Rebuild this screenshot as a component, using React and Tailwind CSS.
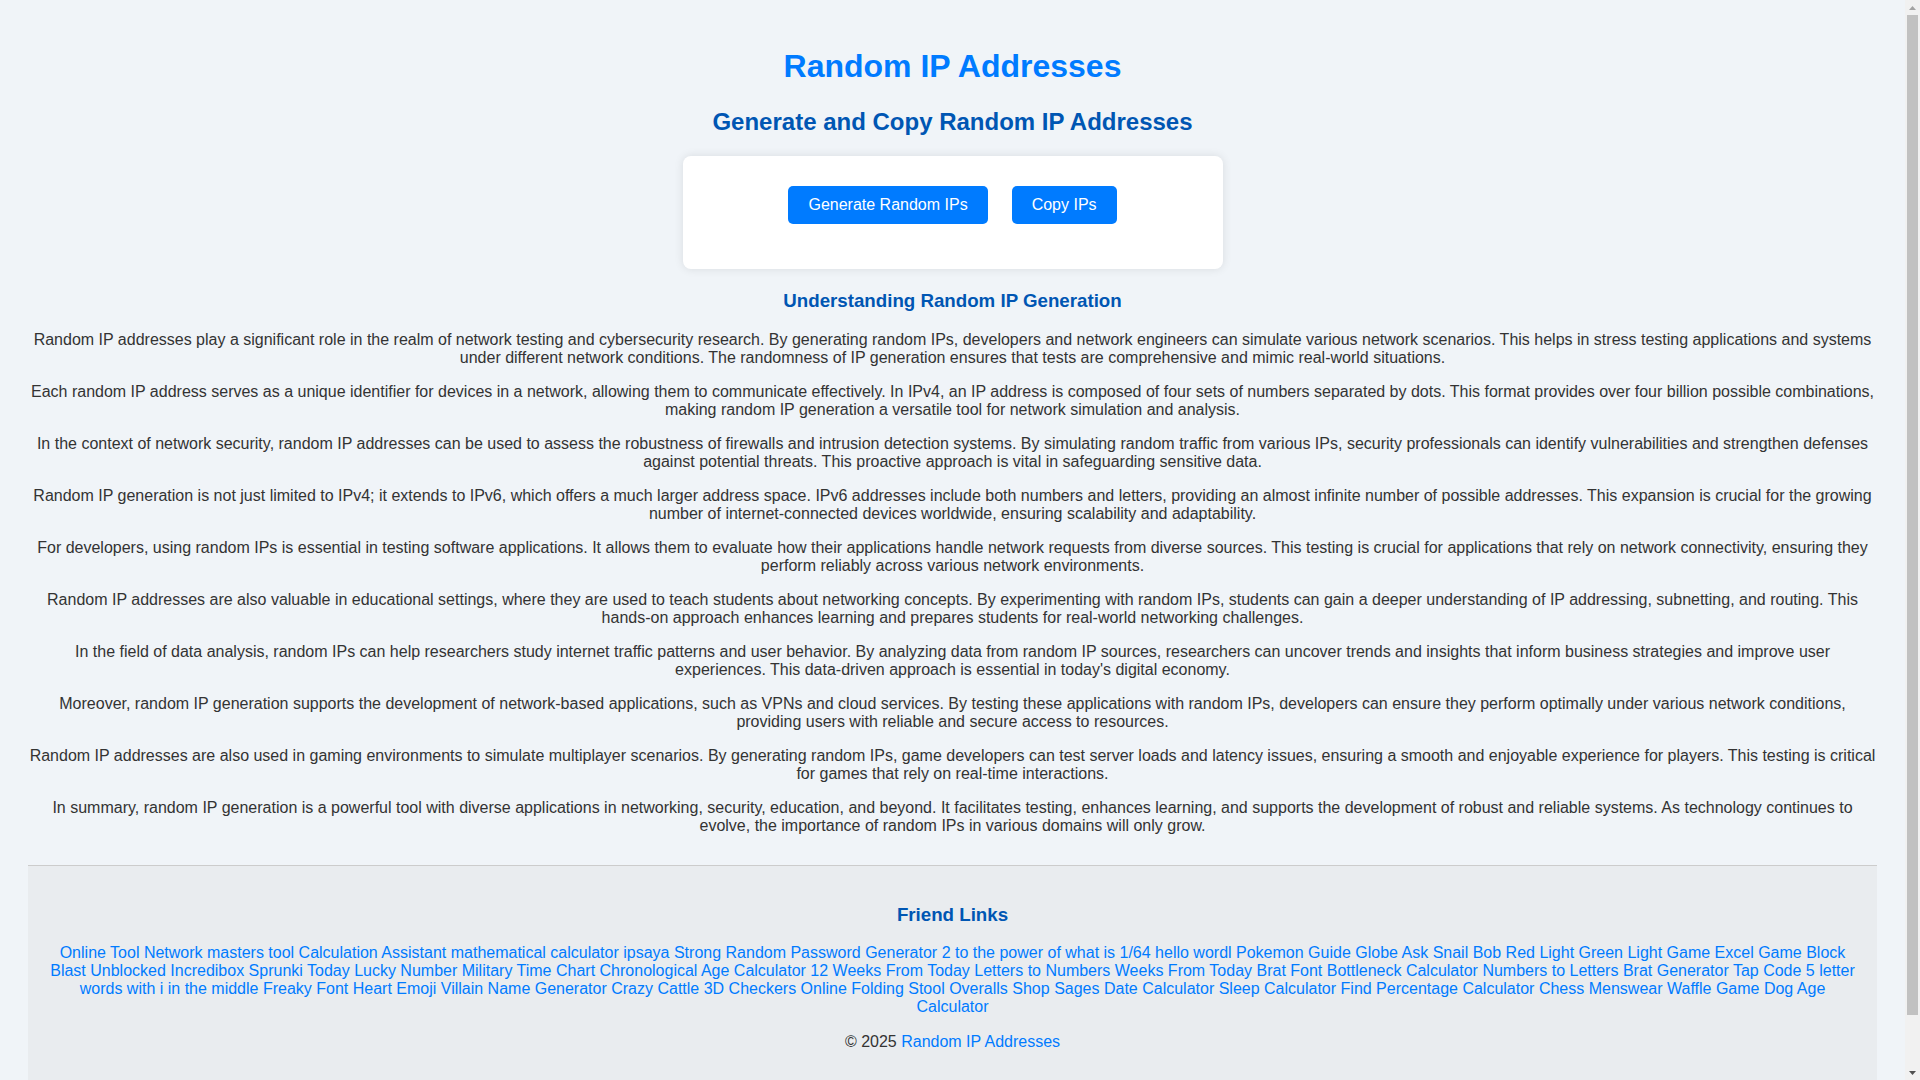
import React from "react";

const paragraphs = [
  "Random IP addresses play a significant role in the realm of network testing and cybersecurity research. By generating random IPs, developers and network engineers can simulate various network scenarios. This helps in stress testing applications and systems under different network conditions. The randomness of IP generation ensures that tests are comprehensive and mimic real-world situations.",
  "Each random IP address serves as a unique identifier for devices in a network, allowing them to communicate effectively. In IPv4, an IP address is composed of four sets of numbers separated by dots. This format provides over four billion possible combinations, making random IP generation a versatile tool for network simulation and analysis.",
  "In the context of network security, random IP addresses can be used to assess the robustness of firewalls and intrusion detection systems. By simulating random traffic from various IPs, security professionals can identify vulnerabilities and strengthen defenses against potential threats. This proactive approach is vital in safeguarding sensitive data.",
  "Random IP generation is not just limited to IPv4; it extends to IPv6, which offers a much larger address space. IPv6 addresses include both numbers and letters, providing an almost infinite number of possible addresses. This expansion is crucial for the growing number of internet-connected devices worldwide, ensuring scalability and adaptability.",
  "For developers, using random IPs is essential in testing software applications. It allows them to evaluate how their applications handle network requests from diverse sources. This testing is crucial for applications that rely on network connectivity, ensuring they perform reliably across various network environments.",
  "Random IP addresses are also valuable in educational settings, where they are used to teach students about networking concepts. By experimenting with random IPs, students can gain a deeper understanding of IP addressing, subnetting, and routing. This hands-on approach enhances learning and prepares students for real-world networking challenges.",
  "In the field of data analysis, random IPs can help researchers study internet traffic patterns and user behavior. By analyzing data from random IP sources, researchers can uncover trends and insights that inform business strategies and improve user experiences. This data-driven approach is essential in today's digital economy.",
  "Moreover, random IP generation supports the development of network-based applications, such as VPNs and cloud services. By testing these applications with random IPs, developers can ensure they perform optimally under various network conditions, providing users with reliable and secure access to resources.",
  "Random IP addresses are also used in gaming environments to simulate multiplayer scenarios. By generating random IPs, game developers can test server loads and latency issues, ensuring a smooth and enjoyable experience for players. This testing is critical for games that rely on real-time interactions.",
  "In summary, random IP generation is a powerful tool with diverse applications in networking, security, education, and beyond. It facilitates testing, enhances learning, and supports the development of robust and reliable systems. As technology continues to evolve, the importance of random IPs in various domains will only grow.",
];

const links = [
  "Online Tool",
  "Network masters tool",
  "Calculation Assistant",
  "mathematical calculator",
  "ipsaya",
  "Strong Random Password Generator",
  "2 to the power of what is 1/64",
  "hello wordl",
  "Pokemon Guide",
  "Globe Ask",
  "Snail Bob",
  "Red Light Green Light Game",
  "Excel Game",
  "Block Blast Unblocked",
  "Incredibox Sprunki",
  "Today Lucky Number",
  "Military Time Chart",
  "Chronological Age Calculator",
  "12 Weeks From Today",
  "Letters to Numbers",
  "Weeks From Today",
  "Brat Font",
  "Bottleneck Calculator",
  "Numbers to Letters",
  "Brat Generator",
  "Tap Code",
  "5 letter words with i in the middle",
  "Freaky Font",
  "Heart Emoji",
  "Villain Name Generator",
  "Crazy Cattle 3D",
  "Checkers Online",
  "Folding Stool",
  "Overalls Shop",
  "Sages",
  "Date Calculator",
  "Sleep Calculator",
  "Find Percentage Calculator",
  "Chess",
  "Menswear",
  "Waffle Game",
  "Dog Age Calculator",
];

function Scrollbar() {
  return (
    <div className="flex h-screen w-[15px] shrink-0 flex-col bg-[#f1f1f1]">
      <div className="flex h-[15px] items-center justify-center">
        <svg width="7" height="4" viewBox="0 0 7 4">
          <polygon points="3.5,0 7,4 0,4" fill="#a3a3a3" />
        </svg>
      </div>
      <div className="px-[2px]">
        <div className="h-[1000px] bg-[#c1c1c1]" />
      </div>
      <div className="flex-1" />
      <div className="flex h-[15px] items-center justify-center">
        <svg width="7" height="4" viewBox="0 0 7 4">
          <polygon points="0,0 7,0 3.5,4" fill="#505050" />
        </svg>
      </div>
    </div>
  );
}

export default function App() {
  return (
    <div className="flex h-screen overflow-hidden bg-[#f0f4f8] font-['Liberation_Sans',Arial,sans-serif] text-[#333] leading-[normal]">
      <div className="min-w-0 flex-1 overflow-hidden px-[28px] pt-[48px] pb-[47px]">
        <h1 className="m-0 text-center text-[32px] font-bold text-[#007bff] leading-[36.8px]">
          Random IP Addresses
        </h1>
        <h2 className="mt-[23.5px] mb-0 text-center text-[24px] font-bold text-[#0056b3] leading-[27.6px]">
          Generate and Copy Random IP Addresses
        </h2>

        <div className="mx-auto mt-[20px] w-[540px] rounded-[8px] bg-white pt-[30px] pb-[45px] shadow-[0_0_10px_rgba(0,0,0,0.1)]">
          <div className="flex justify-center gap-[24px]">
            <button className="rounded-[5px] bg-[#007bff] px-[20px] py-[10px] text-[16px] leading-[18px] text-white">
              Generate Random IPs
            </button>
            <button className="rounded-[5px] bg-[#007bff] px-[20px] py-[10px] text-[16px] leading-[18px] text-white">
              Copy IPs
            </button>
          </div>
        </div>

        <h3 className="mt-[21px] mb-0 text-center text-[18.72px] font-bold text-[#0056b3] leading-[21.5px]">
          Understanding Random IP Generation
        </h3>

        <div className="mt-[19.5px] flex flex-col gap-[16px]">
          {paragraphs.map((p, i) => (
            <p key={i} className="m-0 text-center text-[16px] leading-[18px] text-[#333]">
              {p}
            </p>
          ))}
        </div>

        <footer className="mt-[30px] border-t border-[#ccc] bg-[#e9ecef] px-[20px] pt-[20px] pb-[36px] text-center">
          <h3 className="mt-[18.5px] mb-0 text-[18.72px] font-bold text-[#0056b3] leading-[21.5px]">
            Friend Links
          </h3>
          <p className="mt-[18px] mb-0 text-[16px] leading-[18px]">
            {links.map((l, i) => (
              <React.Fragment key={i}>
                <a href="#" className="text-[#007bff] no-underline">
                  {l}
                </a>
                {i < links.length - 1 ? " " : ""}
              </React.Fragment>
            ))}
          </p>
          <p className="mt-[17px] mb-0 text-[16px] leading-[18px] text-[#333]">
            © 2025{" "}
            <a href="#" className="text-[#007bff] no-underline">
              Random IP Addresses
            </a>
          </p>
        </footer>
      </div>
      <Scrollbar />
    </div>
  );
}
